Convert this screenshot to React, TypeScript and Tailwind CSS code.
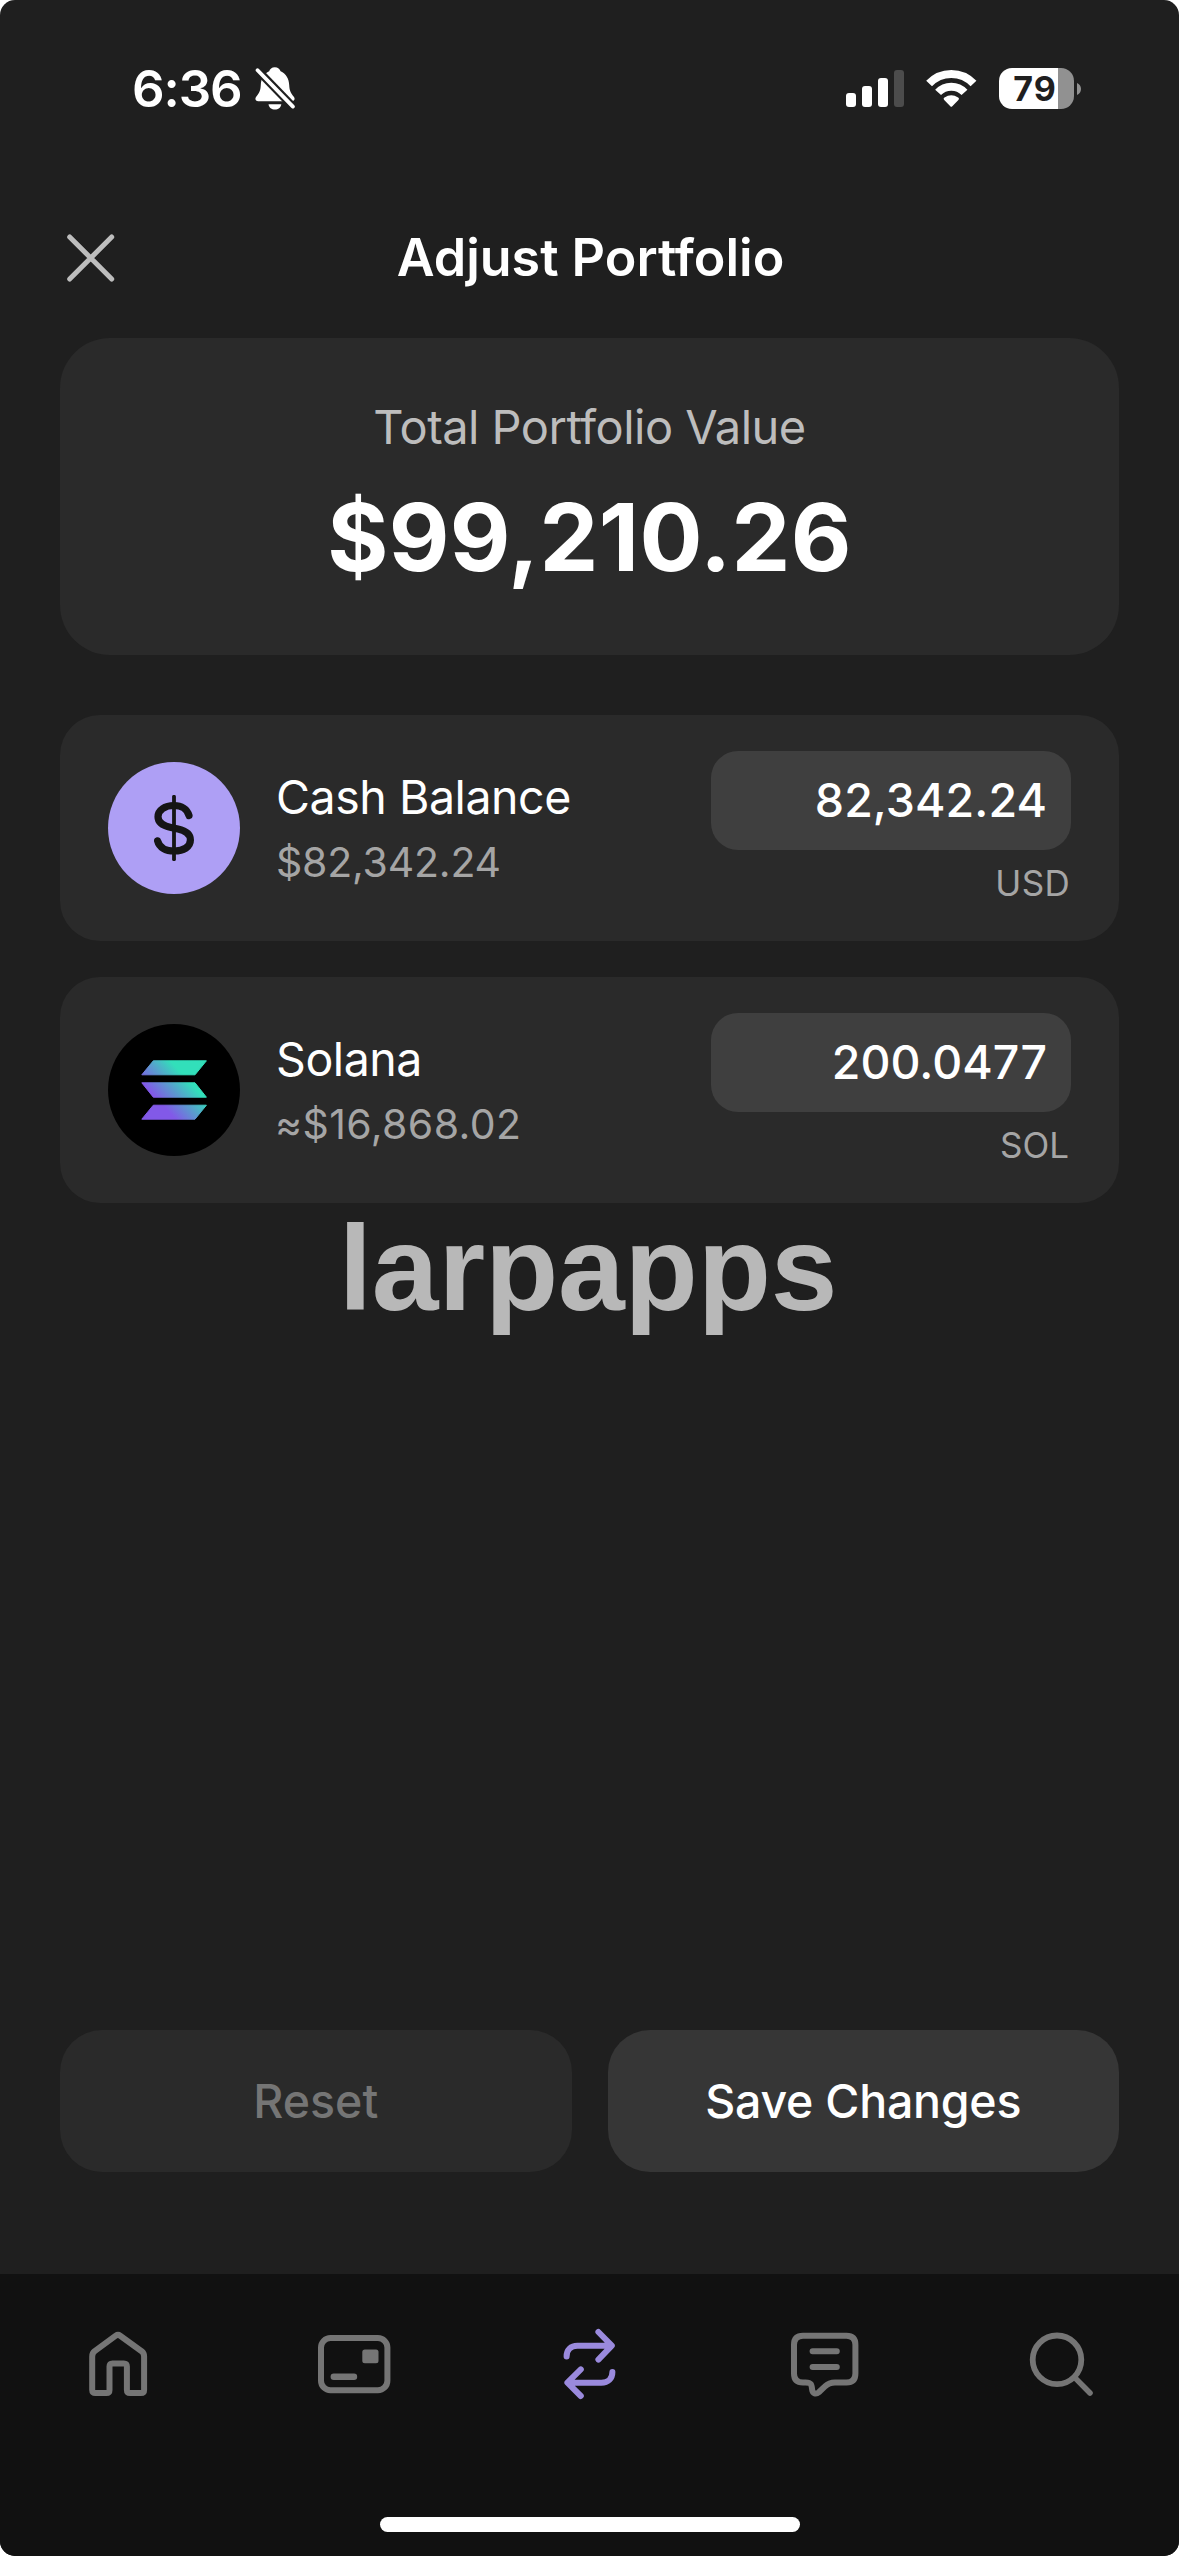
import type { ReactNode } from 'react';

function BellOff() {
  return (
    <svg width="41" height="43" viewBox="0 0 41 43" fill="none">
      <path
        d="M19.8 .2C22.9 .2 24.9 1.9 25.6 4.3C31 6.6 34 11.8 34.2 18C34.4 24 36.2 26.6 39 30C40.4 32.2 39.2 34.2 36.8 34.2H3.2C.8 34.2 -.4 32.2 1 30C3.8 26.6 5.6 24 5.8 18C6 11.8 9 6.6 14.2 4.3C14.8 1.9 16.8 .2 19.8 .2Z"
        fill="#fff"
      />
      <path d="M13.5 37.2H26.3C25.8 40.5 23.2 42.6 19.9 42.6S14 40.5 13.5 37.2Z" fill="#fff" />
      <path d="M-2 -1.7L42 43.9" stroke="#1f1f1f" strokeWidth="8" />
      <path d="M2.6 3.2L37.9 39.6" stroke="#fff" strokeWidth="3.8" strokeLinecap="round" />
    </svg>
  );
}

function Signal() {
  return (
    <div className="flex h-[37px] items-end gap-1.5">
      <span className="h-3.5 w-2.5 rounded-[3px] bg-white" />
      <span className="h-[21px] w-2.5 rounded-[3px] bg-white" />
      <span className="h-[29px] w-2.5 rounded-[3px] bg-white" />
      <span className="h-[37px] w-2.5 rounded-[3px] bg-[#4c4c4c]" />
    </div>
  );
}

function Wifi() {
  return (
    <svg width="51" height="37" viewBox="0 0 51 37" fill="none">
      <path d="M3.1 13.6A30.5 30.5 0 0 1 47.5 13.6" stroke="#fff" strokeWidth="8" />
      <path d="M12.1 22.4A18 18 0 0 1 38.5 22.4" stroke="#fff" strokeWidth="8" />
      <path d="M24.3 36.3L18.2 30Q17 28.6 18.5 27.6Q25.3 22.8 32.1 27.6Q33.6 28.6 32.4 30L26.3 36.3Q25.3 37.3 24.3 36.3Z" fill="#fff" />
    </svg>
  );
}

function Battery() {
  return (
    <div className="flex items-center gap-[3px]">
      <div className="flex h-[41px] w-[75px] items-center justify-center rounded-[13px] bg-[linear-gradient(to_right,#fff_59px,#919191_59px)] pr-[3px] text-[34px] leading-none font-bold tracking-[1px] text-[#1f1f1f]">
        79
      </div>
      <svg width="4" height="12" viewBox="0 0 4 12">
        <path d="M0 0C2.4 1 4 3.3 4 6S2.4 11 0 12Z" fill="#919191" />
      </svg>
    </div>
  );
}

function DollarMark() {
  return (
    <svg width="40" height="66" viewBox="0 0 40 66" fill="none" stroke="#151515" strokeLinecap="round">
      <path
        d="M35 20.5C33.3 14.2 27.5 10.5 20 10.5C11 10.5 4 15 4 21.8C4 28 9 30.8 17 32.5L24 34C32 35.8 36.4 39 36.4 45C36.4 52 29.5 56 20.3 56C11.5 56 5.2 52.2 3.6 45.8"
        strokeWidth="7.2"
      />
      <path d="M20 1.8V64.2" strokeWidth="3.8" />
    </svg>
  );
}

function SolanaMark() {
  return (
    <svg width="66" height="60" viewBox="0 0 66 60">
      <defs>
        <linearGradient id="sol" gradientUnits="userSpaceOnUse" x1="16" y1="46" x2="51" y2="14">
          <stop offset="0.1" stopColor="#8259e8" />
          <stop offset="0.5" stopColor="#589fcd" />
          <stop offset="0.85" stopColor="#32dfba" />
        </linearGradient>
      </defs>
      <g fill="url(#sol)" stroke="url(#sol)" strokeWidth="1" strokeLinejoin="round">
        <path d="M12.3 .8H65.4L54 14.8H.8Z" />
        <path d="M.8 22.8H54L65.4 37.2H12.3Z" />
        <path d="M12.3 45.2H65.4L54 59.2H.8Z" />
      </g>
    </svg>
  );
}

function TabIcon({ children, active = false }: { children: ReactNode; active?: boolean }) {
  return (
    <div className={active ? 'flex flex-1 justify-center text-[#9a8add]' : 'flex flex-1 justify-center text-[#757575]'}>
      <svg width="80" height="72" viewBox="0 0 80 72" fill="none" stroke="currentColor" strokeWidth="6" strokeLinecap="round" strokeLinejoin="round">
        {children}
      </svg>
    </div>
  );
}

type AssetProps = { icon: ReactNode; name: string; value: string; valueClass: string; amount: string; unit: string; unitClass: string };

function AssetRow({ icon, name, value, valueClass, amount, unit, unitClass }: AssetProps) {
  return (
    <div className="flex h-[226px] items-center rounded-[40px] bg-[#2a2a2a] px-12">
      {icon}
      <div className="ml-9 flex flex-1 flex-col gap-[11px] whitespace-nowrap">
        <p className="text-[46.5px] leading-[57px] tracking-[-0.45px] text-white">{name}</p>
        <p className={valueClass}>{value}</p>
      </div>
      <div className="flex flex-col items-end gap-3">
        <div className="flex h-[99px] w-[360px] items-center justify-end rounded-[27px] bg-[#3f3f3f] pr-6 text-[46.5px] font-medium tracking-[0.05px] text-white">
          {amount}
        </div>
        <p className={unitClass}>{unit}</p>
      </div>
    </div>
  );
}

export default function App() {
  return (
    <div className="h-[2556px] w-[1179px] overflow-hidden bg-white font-['Inter',sans-serif]">
      <div className="relative flex h-full flex-col overflow-hidden rounded-[15px] bg-[#1f1f1f]">
        <div className="flex h-[177px] items-center justify-between pr-[98px] pl-[132px]">
          <div className="flex items-center gap-[13px]">
            <span className="text-[51px] leading-none font-semibold tracking-[-1.1px] text-white">6:36</span>
            <BellOff />
          </div>
          <div className="flex items-center">
            <Signal />
            <div className="ml-[22px]">
              <Wifi />
            </div>
            <div className="ml-[22px]">
              <Battery />
            </div>
          </div>
        </div>

        <header className="grid h-[161px] grid-cols-[1fr_auto_1fr] items-center px-16">
          <svg width="54" height="54" viewBox="0 0 54 54" stroke="#bdbdbd" strokeWidth="5" strokeLinecap="round">
            <path d="M5.7 6L47.7 48M47.7 6L5.7 48" />
          </svg>
          <h1 className="pl-0.5 text-[52px] leading-none font-semibold text-white">Adjust Portfolio</h1>
        </header>

        <main className="flex flex-1 flex-col px-[60px]">
          <section className="flex h-[317px] flex-col items-center gap-[25px] rounded-[50px] bg-[#2a2a2a] pt-[60px]">
            <p className="text-[47px] leading-[57px] tracking-[-0.53px] text-[#bdbdbd]">Total Portfolio Value</p>
            <p className="text-[93.5px] leading-[115px] font-bold tracking-[0.3px] text-white">$99,210.26</p>
          </section>

          <section className="mt-[60px] flex flex-col gap-9">
            <AssetRow
              icon={
                <div className="flex size-[132px] items-center justify-center rounded-full bg-[#ae9ff5]">
                  <DollarMark />
                </div>
              }
              name="Cash Balance"
              value="$82,342.24"
              valueClass="text-[41px] leading-[50px] tracking-[-0.2px] text-[#a5a5a5]"
              amount="82,342.24"
              unit="USD"
              unitClass="pr-px text-[35px] leading-[43px] tracking-[0.3px] text-[#a5a5a5]"
            />
            <AssetRow
              icon={
                <div className="flex size-[132px] items-center justify-center rounded-full bg-black">
                  <SolanaMark />
                </div>
              }
              name="Solana"
              value="≈$16,868.02"
              valueClass="-ml-px text-[41px] leading-[50px] tracking-[0.4px] text-[#a5a5a5]"
              amount="200.0477"
              unit="SOL"
              unitClass="pr-0.5 text-[35px] leading-[43px] text-[#a5a5a5]"
            />
          </section>

          <div className="mt-auto mb-[102px] grid grid-cols-2 gap-9">
            <button className="h-[142px] rounded-[42px] bg-[#2a2a2a] pt-px text-[46.5px] font-medium text-[#757575]">Reset</button>
            <button className="h-[142px] rounded-[42px] bg-[#363636] pt-px text-[46.5px] font-medium tracking-[-0.25px] text-white">Save Changes</button>
          </div>
        </main>

        <nav className="flex h-[282px] flex-col items-center bg-[#111111] pt-[54px]">
          <div className="flex w-full">
            <TabIcon>
              <path d="M37.8 7.7Q40 6.1 42.2 7.7L63.6 23.2Q66.1 25.2 66.1 28.4V62Q66.1 65.1 63 65.1H52Q48.9 65.1 48.9 62V38.5Q48.9 35.4 45.8 35.4H34.6Q31.5 35.4 31.5 38.5V62Q31.5 65.1 28.4 65.1H17.3Q14.2 65.1 14.2 62V28.4Q14.2 25.2 16.7 23.2Z" />
            </TabIcon>
            <TabIcon>
              <rect x="7" y="10" width="66.4" height="52.2" rx="9.5" />
              <rect x="48.3" y="21.4" width="16.2" height="13.8" rx="2.5" fill="currentColor" stroke="none" />
              <path d="M19.8 48.8H40" strokeWidth="6.4" />
            </TabIcon>
            <TabIcon active>
              <path d="M17.6 28.4C17.6 21.8 21.8 17.7 28.4 17.7H62M49.4 4L62.8 17.7L49.4 31.6" />
              <path d="M63.4 44C63.4 50.8 59 54.7 52.4 54.7H19M31.8 41.4L18.4 54.7L31.8 68" />
            </TabIcon>
            <TabIcon>
              <path d="M18 7.8H61.4Q70.4 7.8 70.4 16.8V45.4Q70.4 54.4 61.4 54.4H50C45.4 54.4 43 55.4 40 58.4L33.8 64.2C31 66.6 27.6 65.6 27.2 62C26.6 56.4 26.2 54.4 20.6 54.4H18Q9 54.4 9 45.4V16.8Q9 7.8 18 7.8Z" />
              <path d="M27.6 23.3H51.8M27.6 39H51.8" />
            </TabIcon>
            <TabIcon>
              <circle cx="36" cy="31.8" r="24.3" strokeWidth="5.8" />
              <path d="M53.8 49.6L69 65" strokeWidth="5.6" />
            </TabIcon>
          </div>
          <div className="mt-[117px] h-[15px] w-[420px] rounded-full bg-white" />
        </nav>

        <p className="pointer-events-none absolute inset-x-0 top-[1208px] pr-[3px] text-center font-['Liberation_Sans',Arial,sans-serif] text-[120px] leading-[120px] font-bold tracking-[-0.2px] text-[#b8b8b8]">
          larpapps
        </p>
      </div>
    </div>
  );
}
